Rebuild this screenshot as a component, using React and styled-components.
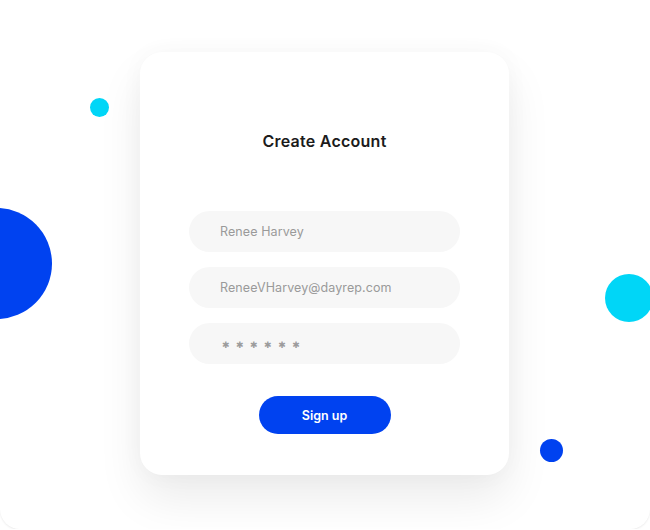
import React from "react";
import styled, { createGlobalStyle } from "styled-components";

const GlobalStyle = createGlobalStyle`
  html, body {
    margin: 0;
    padding: 0;
    background: #ffffff;
  }
  * {
    box-sizing: border-box;
  }
`;

const Frame = styled.div`
  position: relative;
  width: 650px;
  height: 529px;
  overflow: hidden;
  background: #ffffff;
  border-radius: 0 0 20px 20px;
  box-shadow: 0 1px 2px rgba(0, 0, 0, 0.08);
  padding: 52px 0 0 140px;
  font-family: Inter, "Open Sans", sans-serif;
`;

const Dot = styled.span`
  position: absolute;
  border-radius: 50%;
  left: ${(p) => p.x - p.size / 2}px;
  top: ${(p) => p.y - p.size / 2}px;
  width: ${(p) => p.size}px;
  height: ${(p) => p.size}px;
  background: ${(p) => (p.cyan ? "#00d6f7" : "#0042f0")};
`;

const Card = styled.div`
  position: relative;
  z-index: 1;
  width: 369px;
  height: 423px;
  background: #ffffff;
  border-radius: 22px;
  box-shadow: 0 24px 45px rgba(0, 0, 0, 0.08), 0 0 24px rgba(0, 0, 0, 0.03);
  padding: 77px 49px 0;
  display: flex;
  flex-direction: column;
  align-items: center;
`;

const Title = styled.h1`
  margin: 0 0 58px;
  font-size: 16px;
  line-height: 24px;
  font-weight: 600;
  color: #1b1b1b;
  letter-spacing: 0.25px;
`;

const Fields = styled.div`
  display: flex;
  flex-direction: column;
  gap: 15px;
  width: 100%;
`;

const Field = styled.div`
  height: 41px;
  border-radius: 21px;
  background: #f7f7f7;
  display: flex;
  align-items: center;
  padding-left: 31px;
  font-size: 12.5px;
  color: #9a9a9a;
  letter-spacing: 0.1px;
`;

const Secret = styled(Field)`
  padding-left: 33px;
  padding-top: 2px;
  font-family: "DejaVu Sans", sans-serif;
  font-size: 9px;
  letter-spacing: 6.5px;
  color: #9c9c9c;
`;

const Button = styled.button`
  margin-top: 32px;
  width: 132px;
  height: 38px;
  border: none;
  border-radius: 19px;
  background: #0042f0;
  color: #ffffff;
  font-family: inherit;
  font-size: 12.5px;
  font-weight: 600;
  cursor: pointer;
`;

export default function App() {
  return (
    <>
      <GlobalStyle />
      <Frame>
        <Dot cyan x={99.5} y={107.5} size={19} />
        <Dot x={-3.5} y={263.5} size={111} />
        <Dot cyan x={629} y={298} size={48} />
        <Dot x={551.5} y={450.5} size={23} />
        <Card>
          <Title>Create Account</Title>
          <Fields>
            <Field>Renee Harvey</Field>
            <Field>ReneeVHarvey@dayrep.com</Field>
            <Secret>✱✱✱✱✱✱</Secret>
          </Fields>
          <Button>Sign up</Button>
        </Card>
      </Frame>
    </>
  );
}
